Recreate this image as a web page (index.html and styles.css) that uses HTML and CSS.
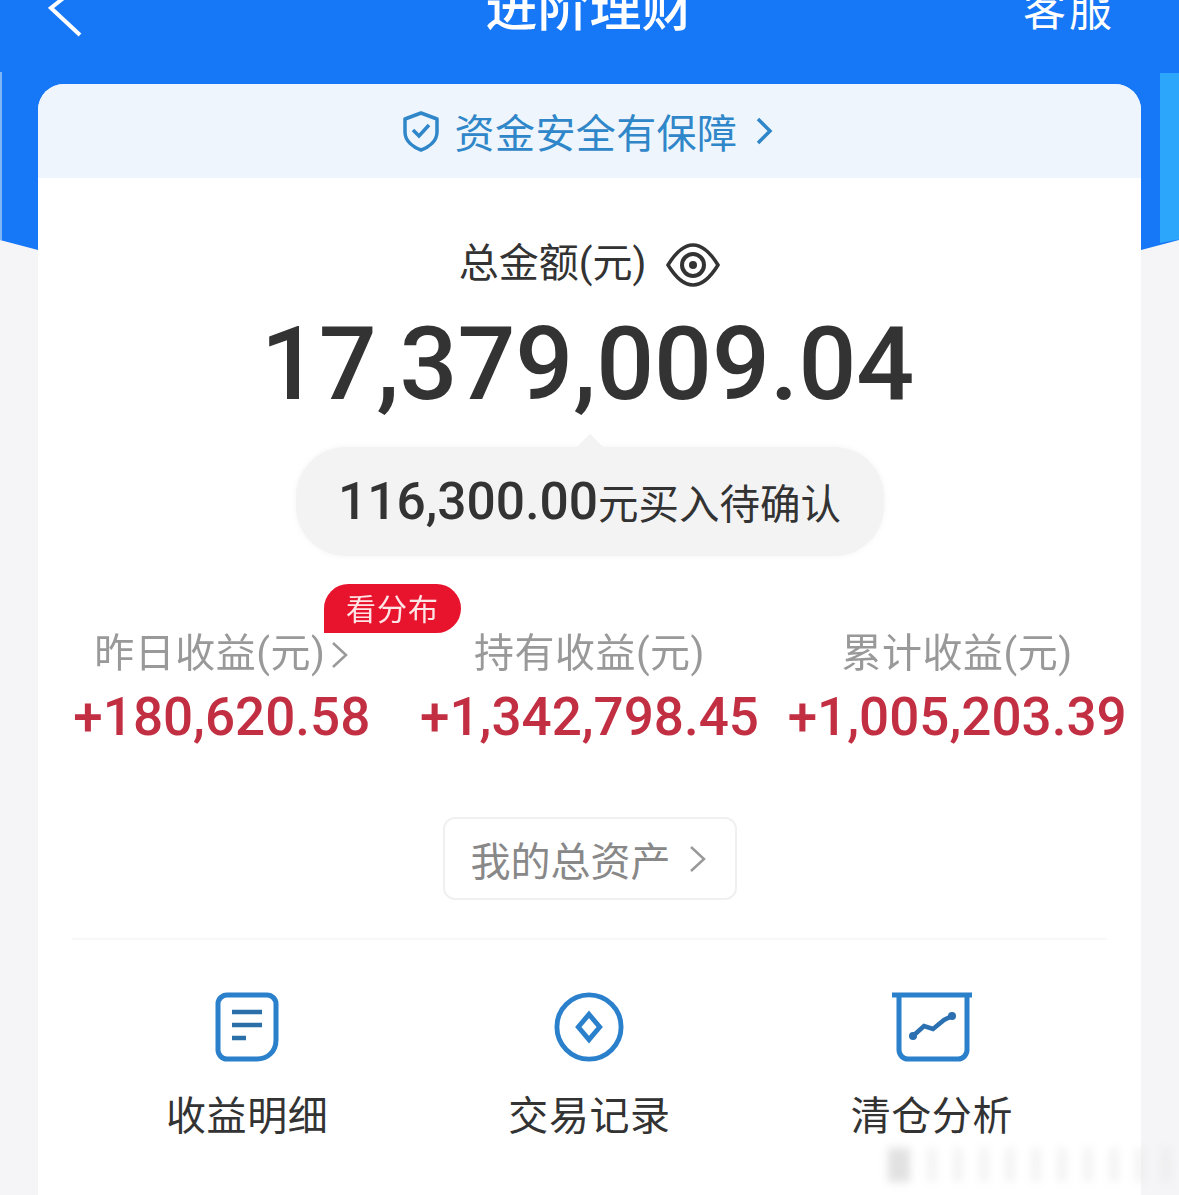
FILE: index.html
```html
<!DOCTYPE html>
<html>
<head>
    <title>进阶理财</title>
    <link rel="stylesheet" href="styles.css">
</head>
<body>
    <div class="hero"></div>
    <div class="hero-strip"></div>
    <div class="hero-edge"></div>

    <div class="top-bar">
        <svg class="back" width="36" height="44" viewBox="0 0 36 44"><path d="M18 1 L3 13 L32 40" fill="none" stroke="#fff" stroke-width="4"/></svg>
        <div class="top-title">进阶理财</div>
        <div class="top-link">客服</div>
    </div>

    <div class="card">
        <div class="safe-bar">
            <svg width="40" height="42" viewBox="0 0 40 42"><path d="M20 3 L36 9 V22 C36 31 28 37 20 40 C12 37 4 31 4 22 V9 Z" fill="none" stroke="#2f86c8" stroke-width="3.5" stroke-linejoin="round"/><path d="M12 20 L18 26 L28 15" fill="none" stroke="#2f86c8" stroke-width="3.5"/></svg>
            <span class="safe-text">资金安全有保障</span>
            <svg width="18" height="30" viewBox="0 0 18 30"><path d="M3 3 L15 15 L3 27" fill="none" stroke="#2f86c8" stroke-width="3.5"/></svg>
        </div>

        <div class="total-label">
            <span>总金额(元)</span>
            <svg width="54" height="44" viewBox="0 0 54 44"><path d="M2 22 C10 9 18 2 27 2 C36 2 44 9 52 22 C44 35 36 42 27 42 C18 42 10 35 2 22 Z" fill="none" stroke="#333" stroke-width="3.5"/><circle cx="27" cy="22" r="11" fill="none" stroke="#333" stroke-width="4"/><circle cx="27" cy="22" r="4" fill="#333"/></svg>
        </div>
        <div class="total-amount">17,379,009.04</div>

        <div class="pending">
            <span class="pending-num">116,300.00</span><span class="pending-text">元买入待确认</span>
        </div>

        <div class="stats">
            <div class="stat">
                <div class="stat-label">昨日收益(元)<svg class="stat-arrow" width="18" height="30" viewBox="0 0 18 30"><path d="M2 3 L15 15 L2 27" fill="none" stroke="#999" stroke-width="2.5"/></svg></div>
                <div class="stat-value">+180,620.58</div>
                <div class="badge">看分布</div>
            </div>
            <div class="stat">
                <div class="stat-label">持有收益(元)</div>
                <div class="stat-value">+1,342,798.45</div>
            </div>
            <div class="stat">
                <div class="stat-label">累计收益(元)</div>
                <div class="stat-value">+1,005,203.39</div>
            </div>
        </div>

        <div class="assets-row">
            <div class="assets-btn">
                <span>我的总资产</span>
                <svg width="18" height="30" viewBox="0 0 18 30"><path d="M2 3 L15 15 L2 27" fill="none" stroke="#999" stroke-width="2.5"/></svg>
            </div>
        </div>

        <div class="divider"></div>

        <div class="actions">
            <div class="action">
                <svg width="64" height="70" viewBox="0 0 64 70"><path d="M12 3 H52 A9 9 0 0 1 61 12 V48 C61 60 52 67 42 67 H12 A9 9 0 0 1 3 58 V12 A9 9 0 0 1 12 3 Z" fill="none" stroke="#2b80cc" stroke-width="5" stroke-linejoin="round"/><path d="M17 20 H47 M17 33 H47 M17 46 H31" fill="none" stroke="#2b6fa8" stroke-width="4.5"/></svg>
                <div class="action-label">收益明细</div>
            </div>
            <div class="action">
                <svg width="72" height="72" viewBox="0 0 72 72"><circle cx="36" cy="36" r="33" fill="none" stroke="#2b80cc" stroke-width="5"/><path d="M36 23 L47 36 L36 49 L25 36 Z" fill="none" stroke="#2b80cc" stroke-width="5"/></svg>
                <div class="action-label">交易记录</div>
            </div>
            <div class="action">
                <svg width="80" height="70" viewBox="0 0 80 70"><path d="M0 3 H80" stroke="#2b80cc" stroke-width="5"/><path d="M7 4 V58 A9 9 0 0 0 16 67 H66 A9 9 0 0 0 75 58 V4" fill="none" stroke="#2b80cc" stroke-width="5"/><path d="M21 44 L32 34 L41 37 L52 28 L60 24" fill="none" stroke="#2b70b0" stroke-width="4.5"/><circle cx="21" cy="44" r="4" fill="#2b70b0"/><circle cx="60" cy="24" r="4" fill="#2b70b0"/></svg>
                <div class="action-label">清仓分析</div>
            </div>
        </div>
    </div>

    <div class="watermark">
        <span></span><span></span><span></span><span></span><span></span><span></span><span></span><span></span><span></span><span></span><span></span>
    </div>
</body>
</html>
```

FILE: styles.css
```css
body {
    position: relative;
    margin: 0;
    height: 1195px;
    overflow: hidden;
    background-color: #f5f5f7;
    font-family: Roboto, "Noto Sans CJK SC", sans-serif;
    color: #333333;
}

/* blue band behind the card */
.hero {
    position: absolute;
    left: 0;
    top: 0;
    width: 100%;
    height: 250px;
    background-color: #1677f7;
    clip-path: polygon(0 0, 100% 0, 100% 240px, 1141px 250px, 38px 250px, 0 240px);
}

.hero-strip {
    position: absolute;
    left: 1160px;
    top: 73px;
    width: 19px;
    height: 170px;
    background-color: #2ca6fa;
    clip-path: polygon(0 0, 100% 0, 100% 98%, 0 100%);
}

.hero-edge {
    position: absolute;
    left: 0;
    top: 72px;
    width: 2px;
    height: 168px;
    background-color: #7fb6f5;
}

.top-bar {
    position: relative;
    display: grid;
    grid-template-columns: 1fr auto 1fr;
    align-items: start;
    height: 84px;
    padding: 0 48px;
    box-sizing: border-box;
    color: #ffffff;
    overflow: hidden;
}

.back {
    margin-top: -5px;
}

.top-title {
    margin-top: -16px;
    font-size: 52px;
    line-height: 50px;
    font-weight: 500;
}

.top-link {
    justify-self: end;
    margin-top: -14px;
    margin-right: 16px;
    font-size: 43px;
    line-height: 50px;
    letter-spacing: 3px;
}

.card {
    position: relative;
    margin: 0 38px;
    height: 1111px;
    background-color: #ffffff;
    border-radius: 26px 26px 0 0;
    overflow: hidden;
    filter: blur(0.5px);
}

.safe-bar {
    display: flex;
    align-items: center;
    justify-content: center;
    gap: 14px;
    height: 94px;
    padding-right: 5px;
    background-color: #eef5fc;
    box-sizing: border-box;
    color: #2f86c8;
    font-size: 40px;
    letter-spacing: 0.4px;
}

.safe-text {
    margin-right: 4px;
}

.total-label {
    display: flex;
    align-items: center;
    justify-content: center;
    gap: 20px;
    height: 50px;
    margin-top: 62px;
    font-size: 40px;
    line-height: 44px;
}

.total-label span {
    margin-top: -2px;
}

.total-amount {
    margin-top: 14px;
    padding-right: 4px;
    font-size: 102px;
    line-height: 120px;
    font-weight: 500;
    text-align: center;
}

.pending {
    position: relative;
    display: flex;
    align-items: center;
    justify-content: center;
    width: 588px;
    height: 109px;
    margin: 23px auto 0;
    background-color: #f3f3f4;
    border-radius: 50px;
    box-shadow: 0 0 6px #f3f3f4;
}

.pending::before {
    content: "";
    position: absolute;
    left: 284px;
    top: -9px;
    width: 20px;
    height: 20px;
    background-color: #f3f3f4;
    transform: rotate(45deg);
}

.pending-num {
    position: relative;
    font-size: 51.5px;
    font-weight: 500;
}

.pending-text {
    position: relative;
    font-size: 40.5px;
}

.stats {
    display: grid;
    grid-template-columns: repeat(3, 1fr);
    margin-top: 72px;
    text-align: center;
}

.stat {
    position: relative;
    white-space: nowrap;
}

.stat-label {
    height: 50px;
    font-size: 40px;
    line-height: 52px;
    letter-spacing: 0.5px;
    color: #999999;
}

.stat-arrow {
    margin-left: 6px;
    vertical-align: -3px;
}

.stat-value {
    margin-top: 7px;
    font-size: 53px;
    line-height: 64px;
    font-weight: 500;
    color: #c22f42;
}

.badge {
    position: absolute;
    left: 286px;
    top: -44px;
    width: 137px;
    height: 49px;
    background-color: #e8132c;
    border-radius: 26px 26px 26px 0;
    color: #ffe4e6;
    font-size: 30px;
    line-height: 51px;
    text-align: center;
    letter-spacing: 1px;
}

.assets-row {
    display: flex;
    justify-content: center;
    margin-top: 68px;
}

.assets-btn {
    display: flex;
    align-items: center;
    gap: 18px;
    width: 294px;
    height: 83px;
    padding-left: 26px;
    box-sizing: border-box;
    border: 2px solid #f0f0f0;
    border-radius: 12px;
    color: #888888;
    font-size: 40px;
}

.divider {
    height: 2px;
    margin: 38px 34px 0;
    background-color: #f8f8f8;
}

.actions {
    display: grid;
    grid-template-columns: repeat(3, 1fr);
    padding: 52px 38px 0;
}

.action {
    display: flex;
    flex-direction: column;
    align-items: center;
}

.action svg {
    height: 70px;
}

.action-label {
    margin-top: 30px;
    font-size: 40px;
    line-height: 50px;
    letter-spacing: 0.6px;
}

/* faint stamp in the corner */
.watermark {
    position: absolute;
    left: 888px;
    top: 1148px;
    display: flex;
    gap: 18px;
    filter: blur(4px);
    opacity: 0.55;
}

.watermark span {
    width: 8px;
    height: 34px;
    background-color: #e6e6e6;
}

.watermark span:first-child {
    width: 22px;
    background-color: #c9c9c9;
}
```
